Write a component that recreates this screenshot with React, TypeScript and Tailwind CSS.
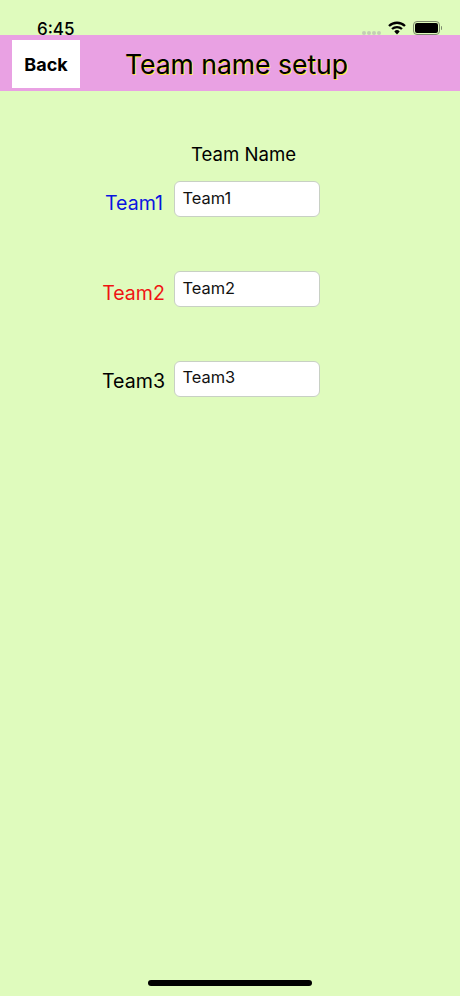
const font = { fontFamily: 'Inter, "Liberation Sans", sans-serif' };

const teams = [
  { name: 'Team1', color: 'text-[#0a14e0]', rowClass: 'mt-[16px]', labelClass: 'pt-[10px] pr-[2px]' },
  { name: 'Team2', color: 'text-[#f01414]', rowClass: 'mt-[54px]', labelClass: 'pt-[10px]' },
  { name: 'Team3', color: 'text-black', rowClass: 'mt-[53.5px]', labelClass: 'pt-[8px]' },
];

function StatusIcons() {
  return (
    <div className="flex items-center">
      <div className="mt-[10px] mr-[7px] flex gap-[1px]">
        {[0, 1, 2, 3].map((i) => (
          <span key={i} className="h-[4px] w-[4px] rounded-full bg-[#c3cfb4]" />
        ))}
      </div>
      <svg width="18" height="14" viewBox="0 0 18 14" className="mr-[7px]">
        <path d="M1 5 A11.5 11.5 0 0 1 17 5" fill="none" stroke="#000" strokeWidth="2.3" />
        <path d="M4 8 A7.4 7.4 0 0 1 14 8" fill="none" stroke="#000" strokeWidth="2.3" />
        <path d="M6.3 10.4 A3.8 3.8 0 0 1 11.7 10.4 L9 13.4 Z" fill="#000" />
      </svg>
      <div className="flex items-center">
        <div className="flex h-[14px] w-[27px] items-center justify-center rounded-[4px] border border-[#7d8a6e]">
          <div className="h-[10px] w-[23px] rounded-[2px] bg-black" />
        </div>
        <div className="ml-[1px] h-[4px] w-[1px] rounded-r bg-[#7d8a6e]" />
      </div>
    </div>
  );
}

export default function App() {
  return (
    <div className="relative h-[996px] w-[460px] overflow-hidden bg-[#dffbbd]" style={font}>
      {/* status bar */}
      <div className="relative z-10 flex h-[35px] items-start justify-between pt-[19px] pl-[37px] pr-[18px]">
        <span className="text-[17px] leading-[20px] font-medium text-black">6:45</span>
        <div className="pt-[2px]">
          <StatusIcons />
        </div>
      </div>

      {/* header */}
      <div className="flex h-[56px] items-center bg-[#e9a1e3] pl-[12px] pt-[2px]">
        <button className="flex h-[48px] w-[68px] items-center justify-center bg-white text-[18px] font-bold text-black">
          Back
        </button>
        <h1 className="ml-[45px] text-[26.5px] leading-[32px] text-black [text-shadow:1px_1px_0_#ffe92e]">
          Team name setup
        </h1>
      </div>

      {/* form */}
      <div className="flex flex-col pl-[100px]">
        <div className="mt-[52px] pl-[91px] text-[18.6px] leading-[22px] text-black">Team Name</div>
        {teams.map((t) => (
          <div key={t.name} className={`flex ${t.rowClass}`}>
            <div className={`w-[65px] text-right text-[19.6px] leading-[24px] ${t.color} ${t.labelClass}`}>
              {t.name}
            </div>
            <div className="ml-[9px] flex h-[36px] w-[146px] items-start rounded-[6px] border-[1.5px] border-[#c8d0c4] bg-white pl-[7.5px] pt-[5.5px] text-[16.4px] leading-[20px] text-[#111]">
              {t.name}
            </div>
          </div>
        ))}
      </div>

      {/* home indicator */}
      <div className="absolute bottom-[10px] left-[148px] h-[6px] w-[164px] rounded-full bg-black" />
    </div>
  );
}
